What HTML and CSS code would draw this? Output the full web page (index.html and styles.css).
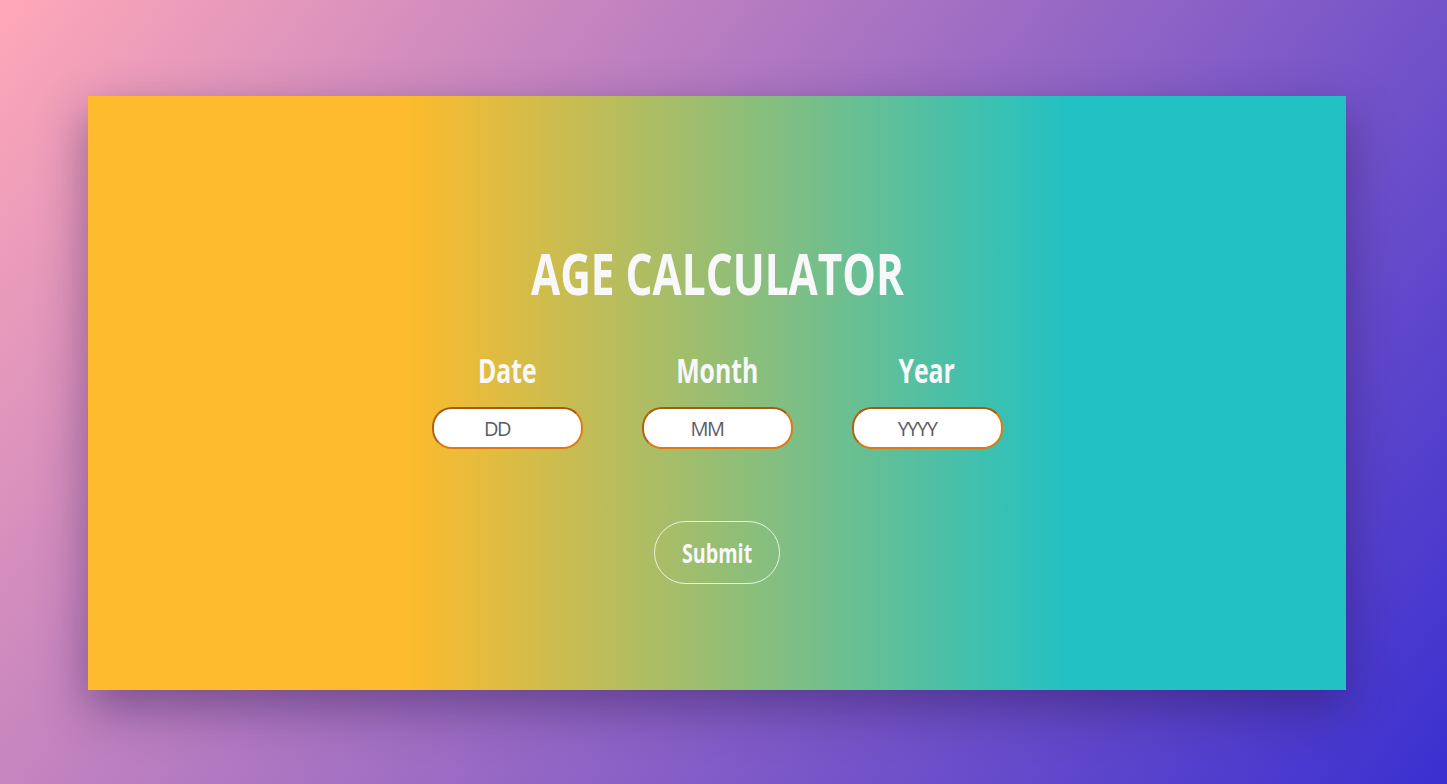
FILE: index.html
```html
<!DOCTYPE html>
<html lang="en">
<head>
<meta charset="utf-8">
<title>Age Calculator</title>
<link rel="stylesheet" href="styles.css">
</head>
<body>
<main class="card">
  <h1 class="title"><span class="squeeze">AGE CALCULATOR</span></h1>
  <form class="form">
    <div class="fields">
      <label class="field">
        <span class="label"><span class="squeeze">Date</span></span>
        <input class="input" type="text" placeholder="DD">
      </label>
      <label class="field">
        <span class="label"><span class="squeeze">Month</span></span>
        <input class="input" type="text" placeholder="MM">
      </label>
      <label class="field">
        <span class="label"><span class="squeeze">Year</span></span>
        <input class="input" type="text" placeholder="YYYY">
      </label>
    </div>
    <button class="submit" type="button"><span class="squeeze">Submit</span></button>
  </form>
</main>
</body>
</html>
```

FILE: styles.css
```css
* { box-sizing: border-box; }

html, body {
  margin: 0;
  height: 784px;
}

body {
  display: flex;
  align-items: center;
  background: linear-gradient(127deg, #ffa8b8 0%, #3a30d0 100%);
  font-family: "Open Sans", "Noto Sans", sans-serif;
  color: #f8f8fa;
}

.card {
  margin-left: 88px;
  margin-top: 2px;
  width: 1258px;
  height: 594px;
  background: linear-gradient(90deg, #fdbb2d 25.5%, #22c1c3 78%);
  box-shadow: 0 18px 45px rgba(40, 20, 80, 0.45);
  display: flex;
  flex-direction: column;
  align-items: center;
  padding-top: 137px;
}

.squeeze {
  display: inline-block;
  transform: scaleX(0.73);
}

.title {
  margin: 0;
  font-size: 58px;
  font-weight: 700;
  line-height: 80px;
  white-space: nowrap;
}

.form {
  display: flex;
  flex-direction: column;
  align-items: center;
}

.fields {
  display: flex;
  gap: 59px;
  margin-top: 34px;
}

.field {
  display: flex;
  flex-direction: column;
  align-items: center;
  width: 151px;
}

.label {
  font-size: 34px;
  font-weight: 700;
  line-height: 46px;
  white-space: nowrap;
}

.input {
  margin-top: 14px;
  width: 151px;
  height: 42px;
  border: 2px solid #e07a10;
  border-top-color: #a65a10;
  border-left-color: #b5600f;
  border-radius: 20px;
  background: #fff;
  text-align: center;
  padding: 0 20px 0 0;
  font-family: "Open Sans", sans-serif;
  font-size: 20px;
  color: #555;
  outline: none;
}

.input::placeholder {
  color: #5c5c66;
  letter-spacing: -1.5px;
}

.submit {
  margin-top: 72px;
  width: 126px;
  height: 63px;
  border: 1px solid rgba(255, 255, 255, 0.8);
  border-radius: 32px;
  background: transparent;
  color: #f8f8fa;
  font-family: "Open Sans", sans-serif;
  font-size: 27px;
  font-weight: 700;
  cursor: pointer;
  padding: 0;
}
```
